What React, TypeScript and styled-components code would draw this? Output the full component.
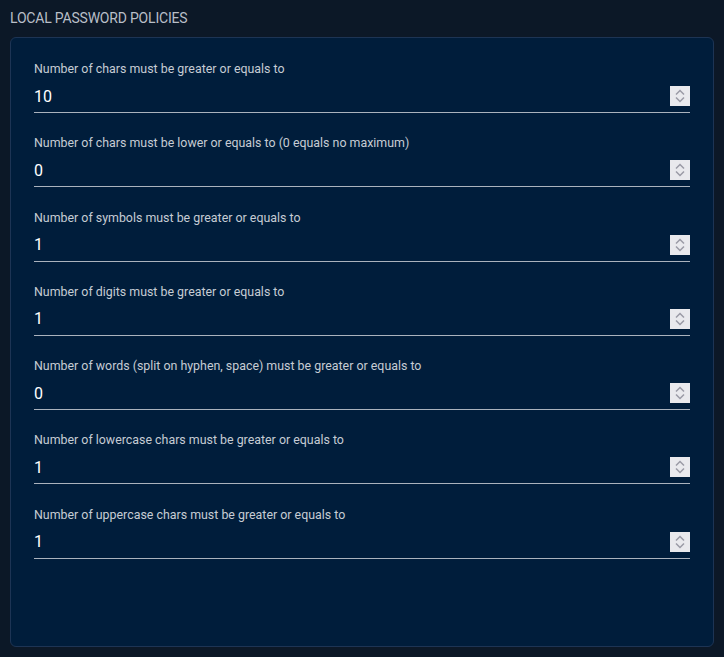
import React from "react"
import styled, { createGlobalStyle } from "styled-components"

const GlobalStyle = createGlobalStyle`
  html, body {
    margin: 0;
    padding: 0;
    background: #0c1827;
  }
  body {
    font-family: Roboto, "Noto Sans", "Liberation Sans", sans-serif;
  }
`

const Page = styled.div`
  width: 724px;
  height: 657px;
  box-sizing: border-box;
  padding: 9px 10px 10px 10px;
  display: flex;
  flex-direction: column;
  background: #0c1827;
`

const Heading = styled.h2`
  margin: 0 0 10px 0;
  font-size: 14px;
  line-height: 18px;
  font-weight: 400;
  letter-spacing: -0.2px;
  color: #b9bfc8;
  text-transform: uppercase;
`

const Card = styled.div`
  flex: 1;
  box-sizing: border-box;
  background: #001d3b;
  border: 1px solid #1d3454;
  border-radius: 6px;
  padding: 23px 23px 0 23px;
  display: flex;
  flex-direction: column;
  gap: 22.3px;
`

const Field = styled.div`
  display: flex;
  flex-direction: column;
`

const Label = styled.label`
  font-size: 12.4px;
  line-height: 15px;
  color: #c6ccd4;
`

const InputRow = styled.div`
  display: flex;
  align-items: center;
  height: 32px;
  margin-top: 4px;
  border-bottom: 1px solid #aab2bd;
`

const Value = styled.input`
  flex: 1;
  background: transparent;
  border: none;
  outline: none;
  padding: 0;
  font-family: inherit;
  font-size: 16px;
  color: #ffffff;
`

const Spinner = styled.div`
  width: 20px;
  height: 20px;
  background: #e9e9ed;
  display: flex;
  align-items: center;
  justify-content: center;
`

const fields = [
  { label: "Number of chars must be greater or equals to", value: "10" },
  { label: "Number of chars must be lower or equals to (0 equals no maximum)", value: "0" },
  { label: "Number of symbols must be greater or equals to", value: "1" },
  { label: "Number of digits must be greater or equals to", value: "1" },
  { label: "Number of words (split on hyphen, space) must be greater or equals to", value: "0" },
  { label: "Number of lowercase chars must be greater or equals to", value: "1" },
  { label: "Number of uppercase chars must be greater or equals to", value: "1" },
]

const SpinIcon = () => (
  <svg width="12" height="16" viewBox="0 0 12 16" fill="none">
    <path d="M2 6.5 L6 2.5 L10 6.5" stroke="#9a9aa6" strokeWidth="1.5" />
    <path d="M2 9.5 L6 13.5 L10 9.5" stroke="#9a9aa6" strokeWidth="1.5" />
  </svg>
)

const App = () => {
  return (
    <>
      <GlobalStyle />
      <Page>
        <Heading>Local password policies</Heading>
        <Card>
          {fields.map((field) => (
            <Field key={field.label}>
              <Label>{field.label}</Label>
              <InputRow>
                <Value type="text" defaultValue={field.value} />
                <Spinner>
                  <SpinIcon />
                </Spinner>
              </InputRow>
            </Field>
          ))}
        </Card>
      </Page>
    </>
  )
}

export default App
